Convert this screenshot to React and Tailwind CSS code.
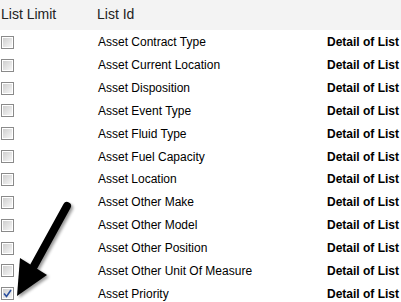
const items = [
  "Asset Contract Type",
  "Asset Current Location",
  "Asset Disposition",
  "Asset Event Type",
  "Asset Fluid Type",
  "Asset Fuel Capacity",
  "Asset Location",
  "Asset Other Make",
  "Asset Other Model",
  "Asset Other Position",
  "Asset Other Unit Of Measure",
  "Asset Priority",
];

const Checkbox = ({ checked }) => (
  <span className="w-[13px] h-[13px] border border-[#8a8a8a] bg-white p-[1px] flex">
    <span className="flex-1 bg-gradient-to-br from-[#cfcfcf] to-[#f6f6f6] flex items-center justify-center">
      {checked && (
        <svg width="9" height="9" viewBox="0 0 9 9">
          <path d="M1 4.5 L3.5 7.5 L8 1" fill="none" stroke="#2a4f9e" strokeWidth="1.6" />
        </svg>
      )}
    </span>
  </span>
);

const App = () => {
  return (
    <div className="relative w-[401px] h-[302px] overflow-hidden bg-white font-['Liberation_Sans',Arial,sans-serif]">
      <div className="flex items-center h-[30px] bg-[#f3f3f3] text-[14px] text-[#222] pb-[1px]">
        <span className="w-[97px] pl-[1px]">List Limit</span>
        <span>List Id</span>
      </div>

      <div className="flex flex-col pt-[1px]">
        {items.map((item, i) => (
          <div key={item} className="flex items-center h-[22.85px] text-[12px] text-black">
            <div className="w-[98px] pl-[1px] flex">
              <Checkbox checked={i === items.length - 1} />
            </div>
            <span className="flex-1">{item}</span>
            <span className="font-bold pr-[2px]">Detail of List</span>
          </div>
        ))}
      </div>

      {/* annotation arrow */}
      <svg className="absolute left-0 top-0 pointer-events-none" width="401" height="302">
        <defs>
          <filter id="sh" x="-20%" y="-20%" width="140%" height="140%">
            <feGaussianBlur in="SourceAlpha" stdDeviation="1.5" />
            <feOffset dx="1.5" dy="1.5" />
            <feComponentTransfer>
              <feFuncA type="linear" slope="0.4" />
            </feComponentTransfer>
            <feMerge>
              <feMergeNode />
              <feMergeNode in="SourceGraphic" />
            </feMerge>
          </filter>
        </defs>
        <g filter="url(#sh)">
          <line x1="67" y1="206" x2="34" y2="266" stroke="#000" strokeWidth="8" strokeLinecap="round" />
          <polygon points="20,258 47,275 17,296" fill="#000" />
        </g>
      </svg>
    </div>
  );
};

export default App;
